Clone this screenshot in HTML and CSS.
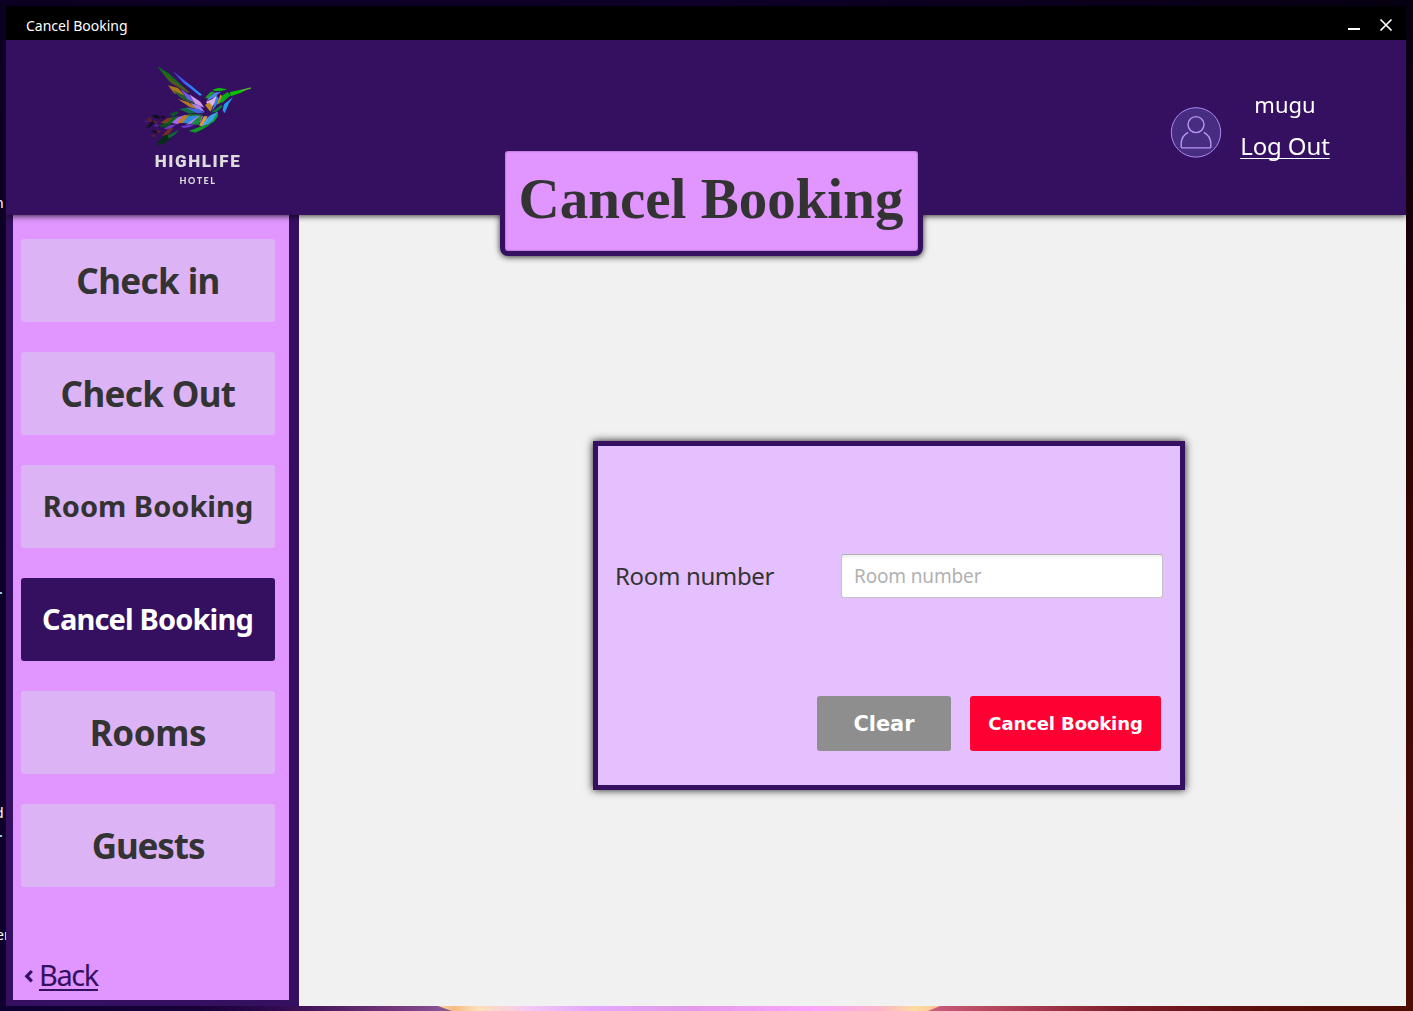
FILE: index.html
```html
<!DOCTYPE html>
<html lang="en">
<head>
<meta charset="utf-8">
<title>Cancel Booking</title>
<link rel="stylesheet" href="styles.css">
</head>
<body>
<div class="desktop">
  <span class="behind behind-1">n</span>
  <span class="behind behind-2">.</span>
  <span class="behind behind-3">d</span>
  <span class="behind behind-4">.</span>
  <span class="behind behind-5">er</span>
  <svg class="wallpaper" width="1413" height="5" viewBox="0 0 1413 5" preserveAspectRatio="none">
    <defs>
      <linearGradient id="edge" x1="0" x2="1413" y1="0" y2="0" gradientUnits="userSpaceOnUse">
        <stop offset="0" stop-color="#0d0030"/><stop offset=".14" stop-color="#170038"/><stop offset=".2" stop-color="#330b50"/><stop offset=".28" stop-color="#75377c"/><stop offset=".33" stop-color="#9362a2"/><stop offset=".64" stop-color="#ce6888"/><stop offset=".7" stop-color="#b84860"/><stop offset=".8" stop-color="#7c1c28"/><stop offset=".9" stop-color="#5a0e0a"/><stop offset="1" stop-color="#4e0c04"/>
      </linearGradient>
      <linearGradient id="glow" x1="438" x2="940" y1="0" y2="0" gradientUnits="userSpaceOnUse">
        <stop offset="0" stop-color="#ffd9a0"/><stop offset=".03" stop-color="#f5bb82"/><stop offset=".08" stop-color="#fce0b8"/><stop offset=".18" stop-color="#f3c8f2"/><stop offset=".3" stop-color="#e5a8fb"/><stop offset=".5" stop-color="#e39aeb"/><stop offset=".75" stop-color="#fba5fa"/><stop offset=".88" stop-color="#fbb4c8"/><stop offset=".95" stop-color="#fddba2"/><stop offset="1" stop-color="#ffc595"/>
      </linearGradient>
    </defs>
    <rect width="1413" height="5" fill="url(#edge)"/>
    <path d="M438 0H940L928 5H452Z" fill="url(#glow)"/>
  </svg>

  <div class="window">
    <div class="titlebar">
      <span class="titlebar-text">Cancel Booking</span>
      <svg class="controls" width="48" height="16" viewBox="0 0 48 16">
        <path d="M2 12H14" stroke="#fff" stroke-width="2"/>
        <path d="M34.5 2.5L45.5 13.5M45.5 2.5L34.5 13.5" stroke="#fff" stroke-width="1.7"/>
      </svg>
    </div>

    <header class="header">
      <div class="logo">
        <svg class="bird" width="140" height="95" viewBox="0 0 420 285">
          <path fill="#087018" d="M82 34L116 55L172 106L148 98L116 78Z"/>
          <path fill="#54561a" d="M94 48L132 78L180 112L172 113L124 84Z"/>
          <path fill="#3d5cf0" d="M128 48L158 72L216 119L209 122L160 84Z"/>
          <path fill="#2492f0" d="M161 77L184 93L217 121L208 121Z"/>
          <path fill="#a8781a" d="M114 91L144 99L166 122L132 115Z"/>
          <path fill="#285c30" d="M126 105L165 122L202 151L157 133Z"/>
          <path fill="#6d5bea" d="M151 101L178 121L196 144L172 132Z"/>
          <path fill="#d09ae8" d="M178 118L211 140L223 158L196 147Z"/>
          <path fill="#b17a22" d="M143 132L174 141L213 166L180 157Z"/>
          <path fill="#a880f4" d="M181 144L210 152L224 171L201 162Z"/>
          <path fill="#126c40" d="M147 162L175 157L208 172L178 176Z"/>
          <path fill="#4068de" d="M167 158L207 162L222 173L201 175Z"/>
          <path fill="#1b9d23" d="M225 128L242 110L254 110L237 131Z"/>
          <path fill="#0fb20f" d="M247 104L266 98L292 103L274 108L254 108Z"/>
          <path fill="#4b87e8" d="M235 130L253 113L273 110L252 127L229 139Z"/>
          <path fill="#e0b4e4" d="M228 141L248 131L261 120L255 143L242 161Z"/>
          <path fill="#c18a25" d="M225 150L238 142L248 157L241 170Z"/>
          <path fill="#258fe8" d="M260 122L266 130L258 152L246 169Z"/>
          <path fill="#ce9135" d="M271 119L278 123L268 143L259 151Z"/>
          <path fill="#06ad10" d="M278 121L293 111L302 121L282 139L265 148Z"/>
          <path fill="#08c400" d="M300 111L326 106L362 98L331 114L302 124Z"/>
          <path fill="#5fa63a" d="M330 106L363 97L363 101L335 109Z"/>
          <path fill="#2499ed" d="M282 148L309 126L297 145L284 175L278 166Z"/>
          <path fill="#087b35" d="M242 173L274 149L278 155L260 170Z"/>
          <path fill="#0aa32c" d="M239 184L263 170L264 184L252 200L229 212Z"/>
          <path fill="#3ca0ee" d="M242 180L264 170L248 196L228 212Z"/>
          <path fill="#177632" d="M150 185L177 178L218 178L204 187L170 188Z"/>
          <path fill="#a867ef" d="M119 202L145 186L168 179L160 195L143 208Z"/>
          <path fill="#c17a25" d="M141 204L157 183L177 180L162 204Z"/>
          <path fill="#2a8dda" d="M157 203L175 184L203 181L181 206Z"/>
          <path fill="#b582f5" d="M168 209L202 184L219 183L211 202Z"/>
          <path fill="#1a8a3b" d="M181 208L201 189L218 180L206 209Z"/>
          <path fill="#dc9a36" d="M207 211L222 184L233 184L218 215Z"/>
          <path fill="#4ea6e4" d="M211 220L229 192L241 180L231 207Z"/>
          <path fill="#0b9c22" d="M176 228L218 212L243 207L218 223L196 233Z"/>
          <path fill="#693bd0" d="M152 214L196 207L180 216L161 219Z"/>
          <path fill="#0b5526" d="M119 177L139 168L146 173L130 185Z"/>
          <path fill="#0b6418" d="M96 210L120 188L146 183L121 207Z"/>
          <path fill="#844118" d="M91 204L112 190L127 188L111 204Z"/>
          <path fill="#114a24" d="M81 210L110 206L135 211L105 219Z"/>
          <path fill="#7139c2" d="M101 222L119 211L139 208L122 221Z"/>
          <path fill="#752f20" d="M95 244L113 223L131 218L116 238Z"/>
          <path fill="#062d17" d="M78 271L99 244L137 232L121 252L101 267Z"/>
          <path fill="#106333" d="M113 241L147 224L135 239L116 251Z"/>
          <path fill="#111020" d="M64 181L82 180L94 192L74 189ZM90 182L109 185L99 191ZM49 218L65 199L73 201L62 217ZM60 228L77 226L83 237L68 231Z"/>
          <path fill="#5a212c" d="M54 189L63 186L65 201L52 200ZM66 196L87 200L76 206ZM60 243L75 238L77 246ZM79 226L94 228L83 237Z"/>
          <path fill="#5925a7" d="M42 198L54 199L50 202ZM70 214L81 205L84 215Z"/>
        </svg>
        <div class="logo-name">HIGHLIFE</div>
        <div class="logo-sub">HOTEL</div>
      </div>

      <h1 class="page-title">Cancel Booking</h1>

      <div class="user">
        <svg class="avatar" width="52" height="52" viewBox="0 0 52 52" fill="none">
          <circle cx="26" cy="26.4" r="24.7" fill="#472d82" stroke="#a98bf0" stroke-width="1"/>
          <circle cx="26" cy="18.6" r="8" stroke="#b796f6" stroke-width="1.4"/>
          <path d="M18.2 26.4C13.5 29 11.2 33 11.2 37.5V40.7Q11.2 41.9 12.4 41.9H39.6Q40.8 41.9 40.8 40.7V37.5C40.8 33 38.5 29 33.8 26.4" stroke="#b796f6" stroke-width="1.4"/>
        </svg>
        <div class="user-text">
          <span class="user-name">mugu</span>
          <a class="logout">Log Out</a>
        </div>
      </div>
    </header>

    <div class="body">
      <nav class="sidebar">
        <a class="nav-item check-in">Check in</a>
        <a class="nav-item check-out">Check Out</a>
        <a class="nav-item small">Room Booking</a>
        <a class="nav-item small active">Cancel Booking</a>
        <a class="nav-item rooms">Rooms</a>
        <a class="nav-item guests">Guests</a>
        <a class="back">
          <svg width="10" height="16" viewBox="0 0 10 16"><path d="M8.8 4L3.8 9.2L8.8 14.4" fill="none" stroke="#350f60" stroke-width="3.2"/></svg>
          <span class="back-text">Back</span>
        </a>
      </nav>
      <main class="main">
        <form class="panel">
          <div class="field">
            <label class="label" for="room">Room number</label>
            <input class="input" id="room" type="text" placeholder="Room number">
          </div>
          <div class="actions">
            <button class="btn clear" type="button">Clear</button>
            <button class="btn cancel" type="button">Cancel Booking</button>
          </div>
        </form>
      </main>
    </div>
  </div>
</div>
</body>
</html>
```
FILE: styles.css
```css
* { box-sizing: border-box; }

body {
  margin: 0;
  font-family: "Noto Sans", "Open Sans", sans-serif;
  color: #333;
}

.desktop {
  position: relative;
  width: 1413px;
  height: 1011px;
  padding: 6px 7px 5px 6px;
  overflow: hidden;
  background:
    linear-gradient(180deg, #070012 0, #0e0010 150px, #1c0008 260px, #350604 520px, #4e0c04 900px) right / 7px 100% no-repeat,
    linear-gradient(90deg, #0b0022, #0e0028 50%, #070012) top / 100% 6px no-repeat,
    linear-gradient(180deg, #0b0022, #10002e) left / 100% 100%;
}

.wallpaper { position: absolute; left: 0; bottom: 0; }

/* Desktop labels that show past the window's left edge */
.behind {
  position: absolute;
  font-size: 14px;
  line-height: 20px;
  color: #fff;
}
.behind-1 { left: -5px; top: 193px; }
.behind-2 { left: -1px; top: 579px; }
.behind-3 { left: -5px; top: 803px; }
.behind-4 { left: -1px; top: 822px; }
.behind-5 { left: -4px; top: 925px; }

.window {
  position: relative;
  display: flex;
  flex-direction: column;
  width: 1400px;
  height: 1000px;
  overflow: hidden;
  background: #f1f1f1;
}

.titlebar {
  display: flex;
  flex: none;
  align-items: center;
  justify-content: space-between;
  height: 34px;
  padding: 4px 12px 0 20px;
  background: #000;
}
.titlebar-text { font-size: 14px; color: #fff; }

.header {
  position: relative;
  z-index: 1;
  display: flex;
  flex: none;
  height: 175px;
  background: #350f60;
  filter: drop-shadow(0 1px 3px rgba(0, 0, 0, 0.8));
}

.logo {
  display: flex;
  flex-direction: column;
  align-items: center;
  width: 140px;
  margin: 15px 0 0 124px;
  color: #dcdcdc;
}
.logo-name {
  margin: 1px 4px 0 0;
  font: 900 17px/20px "Roboto", sans-serif;
  letter-spacing: 1.6px;
}
.logo-sub {
  margin: 5px 4px 0 0;
  font: 900 9px/9px "Lato", sans-serif;
  letter-spacing: 1.5px;
}

.page-title {
  display: flex;
  justify-content: center;
  width: 423px;
  height: 110px;
  margin: 106px 0 0 230px;
  padding-right: 1px;
  border: 5px solid #350f60;
  border-radius: 8px;
  background: #e095ff;
  box-shadow: inset 0 0 2px #7a3fa0;
  font: 700 57px/96px "Liberation Serif", serif;
  white-space: nowrap;
}

.user {
  display: flex;
  width: 236px;
  margin: 66px 0 0 auto;
}
.avatar { flex: none; }
.user-text {
  display: flex;
  flex-direction: column;
  align-items: center;
  width: 90px;
  margin: -21px 0 0 18px;
  color: #fff;
  white-space: nowrap;
}
.user-name { font-size: 22px; line-height: 38px; }
.logout {
  margin-top: 7px;
  font-size: 24px;
  line-height: 32px;
  letter-spacing: -0.1px;
  text-decoration: underline;
  text-decoration-thickness: 1px;
  text-underline-offset: 3px;
  text-decoration-skip-ink: none;
}

.body { display: flex; flex: 1; }

.sidebar {
  display: flex;
  flex-direction: column;
  gap: 30px;
  width: 293px;
  padding: 24px 14px 0 8px;
  border: solid #350f60;
  border-width: 0 10px 6px 7px;
  background: #e095ff;
}
.nav-item {
  display: flex;
  align-items: center;
  justify-content: center;
  height: 83px;
  border-radius: 3px;
  background: #dcb3f5;
  font-size: 35px;
  font-weight: 700;
  white-space: nowrap;
}
.nav-item.check-in { letter-spacing: -0.6px; }
.nav-item.check-out { letter-spacing: -0.65px; }
.nav-item.rooms { letter-spacing: -0.4px; }
.nav-item.guests { letter-spacing: -1.1px; }
.nav-item.small { padding-bottom: 2px; font-size: 29px; }
.nav-item.active {
  padding-right: 1px;
  background: #350f60;
  color: #fff;
  letter-spacing: -0.85px;
}

.back {
  display: flex;
  align-items: center;
  gap: 6px;
  margin-top: 38px;
  padding-left: 2px;
  color: #350f60;
}
.back-text {
  font-size: 29px;
  line-height: 40px;
  letter-spacing: -1.4px;
  text-decoration: underline;
  text-decoration-thickness: 2px;
  text-underline-offset: 3px;
}

.main {
  display: flex;
  flex: 1;
  justify-content: center;
  padding: 226px 0 0 73px;
}
.panel {
  width: 592px;
  height: 349px;
  padding: 108px 17px 0;
  border: 5px solid #350f60;
  background: #e5c0ff;
  box-shadow: 0 0 8px rgba(0, 0, 0, 0.9);
}
.field {
  display: flex;
  align-items: center;
  justify-content: space-between;
}
.label {
  font-size: 24px;
  line-height: 44px;
  letter-spacing: -0.35px;
  white-space: nowrap;
}
.input {
  width: 322px;
  height: 44px;
  padding: 0 12px;
  border: 1px solid #c4c4c4;
  border-top-color: #b0b0b0;
  border-radius: 3px;
  background: linear-gradient(#eee, #fff 5px);
  font: 19px "Noto Sans", sans-serif;
  letter-spacing: -0.15px;
}
.input::placeholder { color: #b1b1b1; opacity: 1; }

.actions {
  display: flex;
  gap: 19px;
  justify-content: flex-end;
  margin: 98px 2px 0 0;
}
.btn {
  height: 55px;
  padding: 0;
  border: 0;
  border-radius: 3px;
  color: #fff;
  font: 700 18px "DejaVu Sans", sans-serif;
  letter-spacing: -0.1px;
  white-space: nowrap;
}
.clear { width: 134px; padding-top: 1px; background: #8e8e8e; font-size: 21px; }
.cancel { width: 191px; background: #ff0033; }
```
